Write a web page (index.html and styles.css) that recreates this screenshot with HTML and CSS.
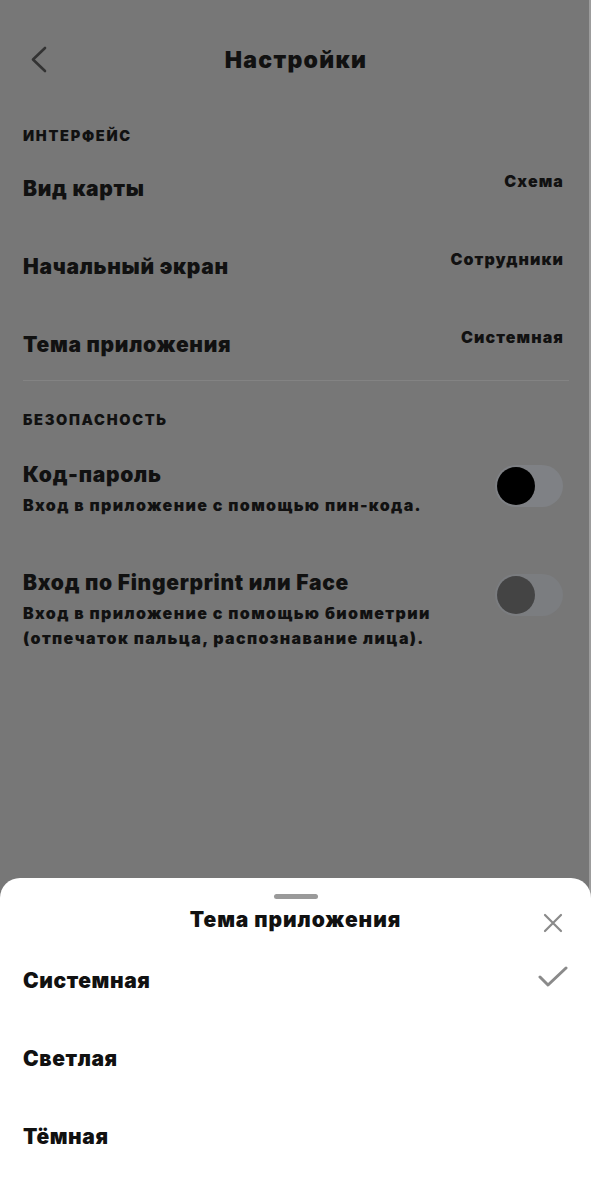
FILE: index.html
```html
<!DOCTYPE html>
<html lang="ru">
<head>
  <meta charset="UTF-8">
  <title>Настройки</title>
  <link rel="stylesheet" href="styles.css">
</head>
<body>

  <div class="page">
    <header class="topbar">
      <svg class="back" width="18" height="27" viewBox="0 0 18 27">
        <path d="M15 2 L3 13.5 L15 25" fill="none" stroke="#333" stroke-width="2.6" stroke-linecap="round" stroke-linejoin="round"/>
      </svg>
      <h1>Настройки</h1>
    </header>

    <section class="group">
      <h2 class="group-title">ИНТЕРФЕЙС</h2>
      <div class="row">
        <span class="row-label">Вид карты</span>
        <span class="row-value">Схема</span>
      </div>
      <div class="row">
        <span class="row-label">Начальный экран</span>
        <span class="row-value">Сотрудники</span>
      </div>
      <div class="row">
        <span class="row-label">Тема приложения</span>
        <span class="row-value">Системная</span>
      </div>
    </section>

    <hr class="divider">

    <section class="group">
      <h2 class="group-title sec">БЕЗОПАСНОСТЬ</h2>
      <div class="switch-row">
        <div class="switch-text">
          <div class="row-label">Код-пароль</div>
          <div class="row-sub">Вход в приложение с помощью пин-кода.</div>
        </div>
        <div class="toggle"><span class="knob"></span></div>
      </div>
      <div class="switch-row">
        <div class="switch-text">
          <div class="row-label">Вход по Fingerprint или Face</div>
          <div class="row-sub">Вход в приложение с помощью биометрии<br>(отпечаток пальца, распознавание лица).</div>
        </div>
        <div class="toggle disabled"><span class="knob"></span></div>
      </div>
    </section>
  </div>

  <!-- нижняя шторка выбора темы -->
  <div class="sheet">
    <div class="handle"></div>
    <div class="sheet-head">
      <h3>Тема приложения</h3>
      <svg class="close" width="20" height="20" viewBox="0 0 20 20">
        <path d="M2 2 L18 18 M18 2 L2 18" stroke="#8a8a8a" stroke-width="2.2" stroke-linecap="round"/>
      </svg>
    </div>
    <ul class="options">
      <li class="option">
        <span>Системная</span>
        <svg class="check" width="30" height="22" viewBox="0 0 30 22">
          <path d="M2 11 L10 19 L28 2" fill="none" stroke="#8a8a8a" stroke-width="3" stroke-linecap="round" stroke-linejoin="round"/>
        </svg>
      </li>
      <li class="option"><span>Светлая</span></li>
      <li class="option"><span>Тёмная</span></li>
    </ul>
  </div>

</body>
</html>
```

FILE: styles.css
```css
body {
  margin: 0;
  font-family: Inter, 'Noto Sans', sans-serif;
  font-weight: 900;
  color: #111;
  background-color: #777;
}

.page {
  height: 1183px;
  padding: 0 22px 0 23px;
  background-color: #777;
  box-shadow: inset -2px 0 0 #9c9c9c;
}

.topbar {
  height: 120px;
  display: flex;
  align-items: center;
  justify-content: center;
  position: relative;
}

.back {
  position: absolute;
  left: 7px;
  top: 46px;
}

h1 {
  margin: 0;
  font-size: 23px;
  font-weight: 900;
  letter-spacing: 1.3px;
}

.group {
  display: flex;
  flex-direction: column;
}

.group-title {
  margin: 7px 0 23px;
  font-size: 14.5px;
  line-height: 18px;
  font-weight: 900;
  letter-spacing: 1.7px;
}

.group-title.sec {
  margin: 30px 0 33px;
}

.row {
  height: 56px;
  margin-bottom: 22px;
  padding-right: 6px;
  display: flex;
  justify-content: space-between;
  align-items: flex-start;
}

.row:last-child {
  margin-bottom: 0;
}

.row-label {
  margin-top: 8px;
  font-size: 21px;
  line-height: 26px;
  letter-spacing: 0.7px;
}

.row-value {
  font-size: 16px;
  line-height: 26px;
  letter-spacing: 1.1px;
  margin-right: -1px;
}

.divider {
  margin: 0;
  border: 0;
  border-top: 1px solid #838383;
}

.switch-row {
  display: flex;
  justify-content: space-between;
  align-items: flex-start;
  padding-right: 6px;
  margin-bottom: 52px;
}

.switch-row .row-label {
  margin-top: 0;
}

.row-sub {
  margin-top: 5px;
  font-size: 16px;
  line-height: 25px;
  letter-spacing: 1.35px;
}

.toggle {
  width: 68px;
  height: 42px;
  margin-top: 3px;
  border-radius: 21px;
  background-color: #7f8185;
  display: flex;
  align-items: center;
  padding-left: 2px;
  box-sizing: border-box;
  flex-shrink: 0;
}

.knob {
  width: 38px;
  height: 38px;
  border-radius: 50%;
  background-color: #000;
}

.toggle.disabled {
  background-color: #7b7d80;
  margin-top: 4px;
}

.toggle.disabled .knob {
  background-color: #444;
}

.sheet {
  position: fixed;
  left: 0;
  right: 0;
  top: 878px;
  bottom: 0;
  background-color: #fff;
  border-radius: 20px 20px 0 0;
  padding: 16px 23px 0;
}

.handle {
  width: 44px;
  height: 5px;
  margin: 0 auto;
  border-radius: 3px;
  background-color: #9a9a9a;
}

.sheet-head {
  margin-top: 8px;
  position: relative;
  text-align: center;
}

.sheet-head h3 {
  margin: 0;
  font-size: 21px;
  line-height: 26px;
  font-weight: 900;
  letter-spacing: 0.9px;
}

.close {
  position: absolute;
  right: 5px;
  top: 6px;
}

.options {
  list-style: none;
  margin: 35px 0 0;
  padding: 0;
}

.option {
  height: 78px;
  display: flex;
  justify-content: space-between;
  align-items: flex-start;
  font-size: 21px;
  line-height: 26px;
  letter-spacing: 0.6px;
}

.check {
  margin-top: -2px;
}
```
